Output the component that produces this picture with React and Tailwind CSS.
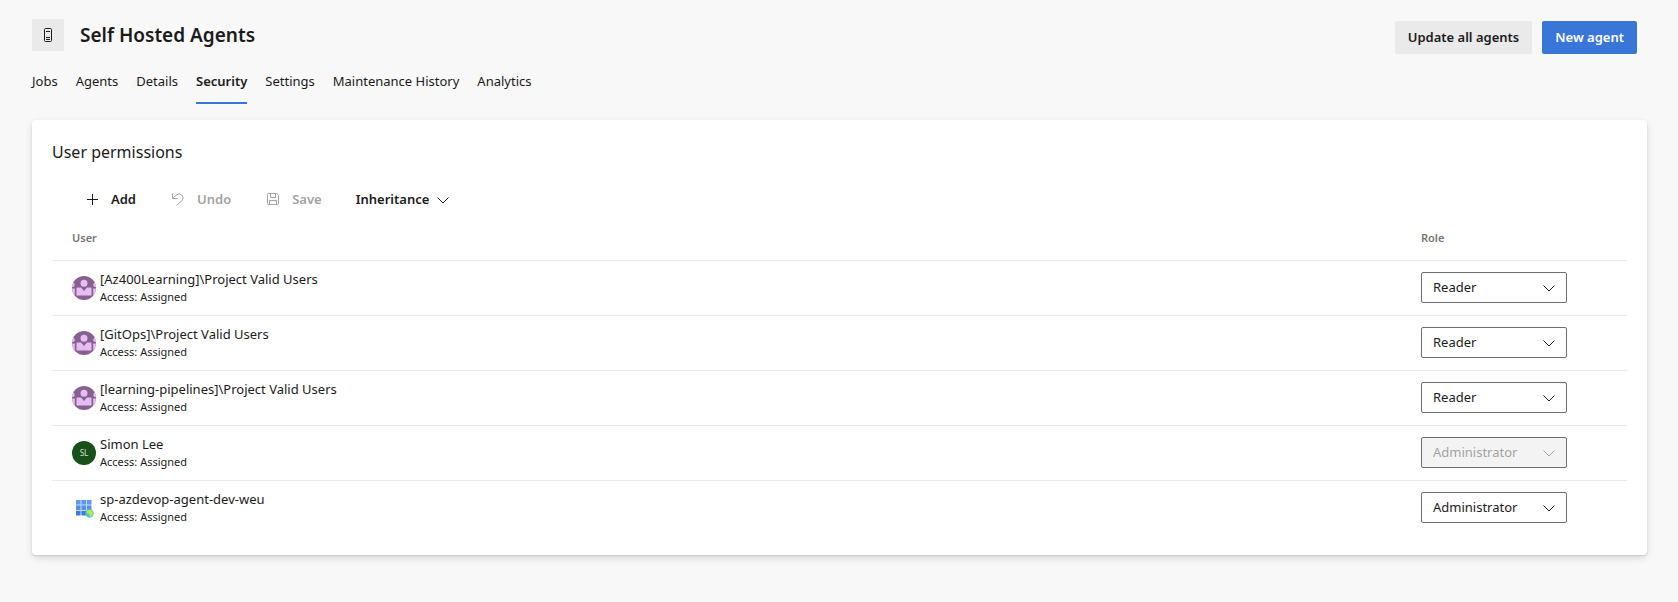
import React from 'react'

const tabs = ['Jobs', 'Agents', 'Details', 'Security', 'Settings', 'Maintenance History', 'Analytics']

const users = [
  { name: '[Az400Learning]\\Project Valid Users', kind: 'group', role: 'Reader' },
  { name: '[GitOps]\\Project Valid Users', kind: 'group', role: 'Reader' },
  { name: '[learning-pipelines]\\Project Valid Users', kind: 'group', role: 'Reader' },
  { name: 'Simon Lee', kind: 'person', initials: 'SL', role: 'Administrator', locked: true },
  { name: 'sp-azdevop-agent-dev-weu', kind: 'service', role: 'Administrator' },
]

const roles = ['Reader', 'User', 'Administrator']

const ServerIcon = () => (
  <svg className="h-4 w-4" viewBox="0 0 16 16" fill="none" stroke="currentColor">
    <rect x="4.5" y="1.5" width="7" height="13" rx="1" />
    <path d="M6 4.5h4M6 10.5h4M6 12.5h4" />
  </svg>
)

const PlusIcon = () => (
  <svg className="h-4 w-4" viewBox="0 0 16 16" fill="none" stroke="currentColor">
    <path d="M8.5 2v11M3 7.5h11" />
  </svg>
)

const UndoIcon = () => (
  <svg className="h-4 w-4" viewBox="0 0 16 16" fill="none" stroke="currentColor">
    <path d="M2.5 1.5v5h5" />
    <path d="M2.8 6.2l3.6-3.2a3.9 3.9 0 0 1 5.5.2a3.9 3.9 0 0 1 0 5.5L6.5 13.5" />
  </svg>
)

const SaveIcon = () => (
  <svg className="h-4 w-4" viewBox="0 0 16 16" fill="none" stroke="currentColor">
    <path d="M3.5 1.5h8.3l1.7 1.7v8.3a1 1 0 0 1-1 1h-9a1 1 0 0 1-1-1v-9a1 1 0 0 1 1-1z" />
    <path d="M5.5 1.5v4h5v-4M4.500 12.500v-4h7v4" />
  </svg>
)

const ChevronIcon = () => (
  <svg className="h-4 w-4" viewBox="0 0 16 16" fill="none" stroke="currentColor">
    <path d="M2.5 5.5L8 11l5.500-5.500" />
  </svg>
)

const GroupAvatar = () => (
  <svg className="h-6 w-6 shrink-0 rounded-full" viewBox="0 0 24 24">
    <rect width="24" height="24" fill="#86608e" />
    <g fill="#e6bdf2">
      <path d="M0 6.500a3 3 0 0 1 2.800 3L1.500 11H0zM24 6.500a3 3 0 0 0-2.800 3L22.500 11H24z" />
      <path d="M0 12.500h2.800v6.500H0zM21.200 12.500H24v6.500h-2.800z" />
      <circle cx="12" cy="7.200" r="3.500" />
      <path d="M5.500 11.500H9l3 3.500 3-3.500h3.500a1 1 0 0 1 1 1V19.500h-15v-7a1 1 0 0 1 1-1z" />
    </g>
  </svg>
)

const ServiceAvatar = () => (
  <svg className="h-6 w-6 shrink-0" viewBox="0 0 24 24">
    <path d="M4 4h15v15H4z" fill="#c3dafa" />
    <path d="M4 4h4.500v4.500H4zM9.500 4H14v4.500H9.500zM15 4h4.500v4.500H15z" fill="#6298ea" />
    <path d="M4 9.500h4.500V14H4zM9.500 9.500H14V14H9.500zM15 9.500h4.500V14H15z" fill="#5590e6" />
    <path d="M4 15h4.500v4.500H4zM9.500 15H14v4.500H9.500z" fill="#3f7bd6" />
    <circle cx="17.500" cy="17.500" r="4.200" fill="#4fc3e8" />
    <path d="M14.800 14.800l3-1 2.700 1.700.5 2-1.500 3-1.500.5-.5-2.500-2.500-1.500z" fill="#b4ec36" />
  </svg>
)

const Avatar = ({ user }) => {
  switch (user.kind) {
    case 'group': return <GroupAvatar />
    case 'service': return <ServiceAvatar />
    default: return (
      <span className="flex h-6 w-6 shrink-0 items-center justify-center rounded-full bg-[#184f1a] text-[8px] text-[#cfe3cf]">
        {user.initials}
      </span>
    )
  }
}

const ToolbarButton = ({ icon, label, disabled }) => (
  <button
    type="button"
    disabled={disabled}
    className="flex h-8 items-center gap-[11px] px-3 text-[13px] font-semibold text-[#1b1b1b] disabled:text-[#a3a3a3]"
  >
    {icon}
    {label}
  </button>
)

const RoleSelect = ({ user }) => (
  <div className={`relative w-[146px] ${user.locked ? 'text-[#a3a3a3]' : 'text-[#1b1b1b]'}`}>
    <select
      aria-label={`Role for ${user.name}`}
      defaultValue={user.role}
      disabled={user.locked}
      className="block h-[31px] w-full appearance-none rounded-xs border border-[#6e6e6e] bg-white px-[11px] text-[13px] opacity-100 disabled:bg-[#f3f3f3]"
    >
      {roles.map((role) => <option key={role}>{role}</option>)}
    </select>
    <span className="pointer-events-none absolute inset-y-0 right-2.5 flex items-center">
      <ChevronIcon />
    </span>
  </div>
)

export default function App() {
  return (
    <div className="min-h-screen bg-[#f8f8f8] pt-[19px] pr-[31px] pb-8 pl-8 font-['Noto_Sans','Open_Sans',sans-serif] text-[#1b1b1b]">
      {/* Header */}
      <header className="flex items-start justify-between pr-2.5">
        <div className="flex gap-4">
          <span className="flex h-8 w-8 items-center justify-center rounded-xs bg-[#eaeaea]">
            <ServerIcon />
          </span>
          <h1 className="text-[19px] leading-8 font-semibold">Self Hosted Agents</h1>
        </div>
        <div className="flex gap-2.5 pt-0.5">
          <button type="button" className="h-[33px] rounded-xs bg-[#eaeaea] px-[13px] text-[13px] font-semibold">
            Update all agents
          </button>
          <button type="button" className="h-[33px] rounded-xs bg-[#3976d8] px-[13px] text-[13px] font-semibold text-white">
            New agent
          </button>
        </div>
      </header>

      {/* Tabs */}
      <nav className="flex gap-[18px] pt-2">
        {tabs.map((tab) => (
          <a
            key={tab}
            href="#"
            className={`border-b-2 pt-1 pb-1.5 text-[13px] leading-[30px] ${
              tab === 'Security' ? 'border-[#3976d8] font-semibold' : 'border-transparent'
            }`}
          >
            {tab}
          </a>
        ))}
      </nav>

      {/* Permissions card */}
      <main className="mt-4 rounded bg-white px-5 pt-5 pb-5 shadow-[0_3px_7px_rgba(0,0,0,0.13),0_1px_2px_rgba(0,0,0,0.1)]">
        <h2 className="text-base leading-6">User permissions</h2>

        <div className="mt-5 flex gap-2.5 pl-5">
          <ToolbarButton icon={<PlusIcon />} label="Add" />
          <ToolbarButton icon={<UndoIcon />} label="Undo" disabled />
          <ToolbarButton icon={<SaveIcon />} label="Save" disabled />
          <button type="button" className="flex h-8 items-center gap-1.5 px-3 text-[13px] font-semibold">
            Inheritance
            <ChevronIcon />
          </button>
        </div>

        <table className="w-full border-collapse text-left">
          <thead>
            <tr className="text-[11px] text-[#757575]">
              <th className="h-11 pl-5 font-semibold">User</th>
              <th className="w-[206px] font-semibold">Role</th>
            </tr>
          </thead>
          <tbody>
            {users.map((user) => (
              <tr key={user.name} className="border-t border-[#eaeaea]">
                <td className="h-[55px] pl-5">
                  <div className="flex items-center gap-1">
                    <Avatar user={user} />
                    <div>
                      <div className="text-[13px] leading-[18px]">{user.name}</div>
                      <div className="text-[11px] leading-[18px]">Access: Assigned</div>
                    </div>
                  </div>
                </td>
                <td>
                  <RoleSelect user={user} />
                </td>
              </tr>
            ))}
          </tbody>
        </table>
      </main>
    </div>
  )
}
